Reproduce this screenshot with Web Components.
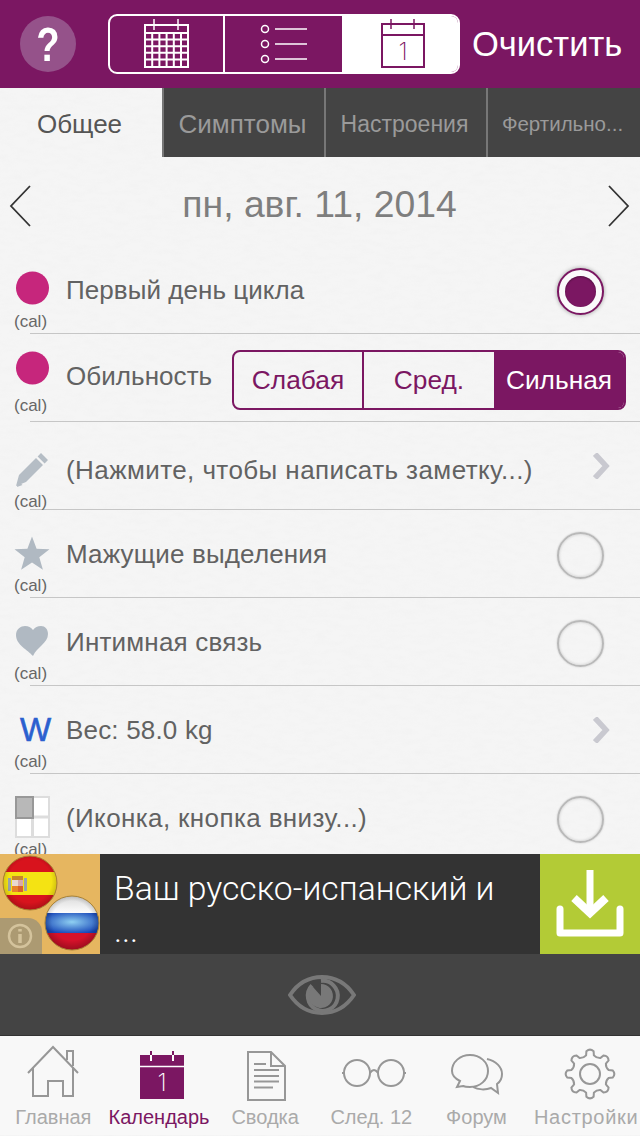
<!DOCTYPE html>
<html lang="ru">
<head>
<meta charset="utf-8">
<title>Календарь</title>
<style>
  html, body { margin: 0; padding: 0; }
  body { font-family: "Liberation Sans", Arial, sans-serif; overflow: hidden; }
</style>
</head>
<body>
<app-shell>
  <top-bar></top-bar>
  <tab-strip></tab-strip>
  <day-view>
    <date-nav>пн, авг. 11, 2014</date-nav>

    <cal-row label="Первый день цикла" style="--icon-y:42px;--cal-gap:6px;--label-y:44px">
      <svg slot="icon" width="36" height="36" viewBox="0 0 36 36"><circle cx="18.500" cy="18" r="16.500" fill="#c6267c"/></svg>
      <radio-mark slot="end" checked></radio-mark>
    </cal-row>

    <cal-row label="Обильность" style="--icon-y:34px;--cal-gap:10px;--label-y:42px">
      <svg slot="icon" width="36" height="36" viewBox="0 0 36 36"><circle cx="18.500" cy="18" r="16.500" fill="#c6267c"/></svg>
      <level-picker slot="end"></level-picker>
    </cal-row>

    <cal-row label="(Нажмите, чтобы написать заметку...)" style="--icon-y:48px;--cal-gap:4px;--label-y:48px;--label-ls:.42px">
      <svg slot="icon" width="36" height="36" viewBox="0 0 36 36"><path fill="#b5bdc5" d="M27 1l7 7-3.400 3.500-7-7zM22 6l7 7-17 17-10 4 3-11zM3 35l1-6 4.500 4z"/></svg>
      <row-chevron slot="end"></row-chevron>
    </cal-row>

    <cal-row label="Мажущие выделения" style="--icon-y:43px;--cal-gap:5px;--label-y:44px;--label-ls:.16px">
      <svg slot="icon" width="36" height="36" viewBox="0 0 36 36"><path fill="#b0b9c2" d="M18 1.500l4.600 12.300 12.900.4-10.200 8 3.600 12.600L18 27.500 7.100 34.800l3.600-12.600-10.200-8 12.900-.4z"/></svg>
      <radio-mark slot="end"></radio-mark>
    </cal-row>

    <cal-row label="Интимная связь" style="--icon-y:43px;--cal-gap:5px;--label-y:44px;--label-ls:.2px">
      <svg slot="icon" width="36" height="36" viewBox="0 0 36 36"><path fill="#b0b9c2" d="M19 33C14 27 2 22 2 12 2 6 7 3 11 3c3.500 0 6 1.500 8 4 2-2.500 4.500-4 8-4 4 0 7 3 7 8 0 9-11 13-15 22z"/></svg>
      <radio-mark slot="end"></radio-mark>
    </cal-row>

    <cal-row label="Вес: 58.0 kg" style="--icon-y:44px;--cal-gap:4px;--label-y:44px;--label-ls:.18px">
      <span slot="icon" style="font:33px/36px 'Liberation Sans',sans-serif;color:#2b60cf;-webkit-text-stroke:.6px #2b60cf;margin-left:6px">W</span>
      <row-chevron slot="end"></row-chevron>
    </cal-row>

    <cal-row label="(Иконка, кнопка внизу...)" style="--icon-y:44px;--cal-gap:4px;--label-y:44px;--label-ls:.38px">
      <svg slot="icon" width="36" height="42" viewBox="0 0 36 42" style="margin-top:-3px">
        <rect x="2" y="1" width="33" height="40" fill="#fff" stroke="#ddd" stroke-width="2"/>
        <path d="M18.500 1v40M2 21h33" stroke="#ddd" stroke-width="3"/>
        <rect x="2" y="1" width="17" height="21" fill="#b8b8b8" stroke="#989898" stroke-width="2"/>
      </svg>
      <radio-mark slot="end"></radio-mark>
    </cal-row>
  </day-view>
  <promo-banner>Ваш русско-испанский и ...</promo-banner>
  <eye-bar></eye-bar>
  <bottom-nav></bottom-nav>
</app-shell>

<script>
const PURPLE = '#7b1762';

class AppShell extends HTMLElement {
  constructor() {
    super();
    this.attachShadow({ mode: 'open' });
    this.shadowRoot.innerHTML = `
      <style>
        :host {
          display: flex;
          flex-direction: column;
          position: relative;
          width: 640px;
          height: 1136px;
          overflow: hidden;
          background: #f5f5f5;
        }
        svg { position: absolute; left: 0; top: 0; }
        .content { position: relative; display: flex; flex-direction: column; height: 100%; }
      </style>
      <svg width="640" height="1136">
        <filter id="paper" x="0" y="0" width="100%" height="100%">
          <feTurbulence type="fractalNoise" baseFrequency="0.07 0.2" numOctaves="3" seed="7"/>
          <feColorMatrix values="0 0 0 0 .55  0 0 0 0 .55  0 0 0 0 .55  .55 0 0 0 -.2"/>
        </filter>
        <rect width="640" height="1136" filter="url(#paper)" opacity=".15"/>
      </svg>
      <div class="content"><slot></slot></div>
    `;
  }
}

class TopBar extends HTMLElement {
  constructor() {
    super();
    this.attachShadow({ mode: 'open' });
    let grid = '';
    for (let i = 1; i < 6; i++) grid += `M${1 + i * 7.2} 14V47`;
    for (let i = 1; i < 5; i++) grid += `M1 ${14 + i * 6.6}H44`;
    this.shadowRoot.innerHTML = `
      <style>
        :host {
          display: flex;
          align-items: center;
          flex: none;
          height: 88px;
          background: ${PURPLE};
          color: #fff;
          box-sizing: border-box;
          padding: 0 16px 0 20px;
        }
        .help {
          flex: none;
          width: 56px;
          height: 56px;
          border-radius: 50%;
          background: #95528a;
          display: flex;
          align-items: center;
          justify-content: center;
          font: bold 49px/56px "Liberation Sans", sans-serif;
        }
        .help span { display: block; transform: scaleX(.78); }
        .switch {
          flex: none;
          display: flex;
          width: 352px;
          height: 60px;
          margin: 0 12px 0 32px;
          box-sizing: border-box;
          border: 2px solid #fff;
          border-radius: 9px;
          overflow: hidden;
        }
        .switch div { display: flex; align-items: center; justify-content: center; box-sizing: border-box; }
        .a { width: 115px; border-right: 2px solid #fff; }
        .b { width: 117px; }
        .c { flex: 1; background: #fff; padding-left: 8px; }
        .clear { font-size: 34.500px; white-space: nowrap; }
        svg { display: block; }
      </style>
      <div class="help"><span>?</span></div>
      <div class="switch">
        <div class="a">
          <svg width="46" height="50" viewBox="0 0 46 50" fill="none" stroke="#fff">
            <rect x="1" y="6" width="43" height="42" stroke-width="2"/>
            <path d="M1 14H44" stroke-width="2"/>
            <path d="${grid}" stroke-width="2"/>
            <path d="M10 0v11M34 0v11" stroke-width="1.500"/>
          </svg>
        </div>
        <div class="b">
          <svg width="48" height="40" viewBox="0 0 48 40" fill="none" stroke="#fff" stroke-width="1.500">
            <circle cx="5" cy="5" r="3.500"/><circle cx="5" cy="20" r="3.500"/><circle cx="5" cy="35" r="3.500"/>
            <path d="M15 5H47M15 20H47M15 35H47"/>
          </svg>
        </div>
        <div class="c">
          <svg width="46" height="50" viewBox="0 0 46 50" fill="none" stroke="${PURPLE}">
            <rect x="1" y="5" width="42" height="43" stroke-width="2"/>
            <path d="M1 16H43" stroke-width="2"/>
            <path d="M10 0v10M33 0v10" stroke-width="1.500"/>
            <text x="22" y="41" text-anchor="middle" font-family="Inter" font-weight="200" font-size="24" fill="${PURPLE}" stroke="none">1</text>
          </svg>
        </div>
      </div>
      <div class="clear">Очистить</div>
    `;
  }
}

class TabStrip extends HTMLElement {
  constructor() {
    super();
    this.attachShadow({ mode: 'open' });
    const tabs = [['Общее', 26], ['Симптомы', 26], ['Настроения', 23], ['Фертильно...', 20.5]];
    this.shadowRoot.innerHTML = `
      <style>
        :host {
          display: grid;
          grid-template-columns: 162px 162px 162px 154px;
          flex: none;
          height: 69px;
        }
        .tab {
          display: flex;
          align-items: center;
          justify-content: center;
          background: #444;
          color: #9a9a9a;
          border-left: 2px solid #777;
          white-space: nowrap;
          box-sizing: border-box;
          padding: 3px 3px 0 0;
        }
        .tab.first { background: none; color: #555; border: 0; }
      </style>
      ${tabs.map((t, i) => `<div class="tab${i ? '' : ' first'}" style="font-size:${t[1]}px">${t[0]}</div>`).join('')}
    `;
  }
}

class DayView extends HTMLElement {
  constructor() {
    super();
    this.attachShadow({ mode: 'open' });
    this.shadowRoot.innerHTML = `
      <style>
        :host { display: block; flex: none; height: 697px; overflow: hidden; }
      </style>
      <slot></slot>
    `;
  }
}

class DateNav extends HTMLElement {
  constructor() {
    super();
    this.attachShadow({ mode: 'open' });
    this.shadowRoot.innerHTML = `
      <style>
        :host {
          display: flex;
          align-items: center;
          justify-content: space-between;
          height: 89px;
          box-sizing: border-box;
          padding: 6px 10px 0 9px;
          color: #7e7e7e;
          font-size: 37.300px;
        }
        svg { display: block; margin-top: 3px; }
      </style>
      <svg width="22" height="42" viewBox="0 0 22 42" fill="none" stroke="#333" stroke-width="1.800"><path d="M21 1L2 21l19 20"/></svg>
      <span><slot></slot></span>
      <svg width="22" height="42" viewBox="0 0 22 42" fill="none" stroke="#333" stroke-width="1.800"><path d="M1 1l19 20L1 41"/></svg>
    `;
  }
}

class CalRow extends HTMLElement {
  constructor() {
    super();
    this.attachShadow({ mode: 'open' });
    this.shadowRoot.innerHTML = `
      <style>
        :host {
          display: flex;
          align-items: flex-start;
          height: 88px;
          padding-right: 36px;
          box-sizing: border-box;
          background: linear-gradient(#c6c6c6, #c6c6c6) no-repeat 30px 100% / 610px 1px;
        }
        .lead {
          flex: none;
          width: 52px;
          margin-left: 14px;
          padding-top: calc(var(--icon-y) - 18px);
        }
        .icon { display: flex; height: 36px; align-items: center; }
        .cal {
          margin-top: var(--cal-gap);
          font-size: 17px;
          line-height: 20px;
          color: #666;
        }
        .label {
          flex: 1;
          margin-top: calc(var(--label-y) - 15px);
          font-size: 26px;
          line-height: 30px;
          letter-spacing: var(--label-ls, .06px);
          color: #626262;
          white-space: nowrap;
        }
        .end { flex: none; display: flex; align-items: center; height: 90px; }
      </style>
      <div class="lead">
        <div class="icon"><slot name="icon"></slot></div>
        <div class="cal">(cal)</div>
      </div>
      <div class="label">${this.getAttribute('label')}</div>
      <div class="end"><slot name="end"></slot></div>
    `;
  }
}

class RadioMark extends HTMLElement {
  constructor() {
    super();
    this.attachShadow({ mode: 'open' });
    const on = this.hasAttribute('checked');
    this.shadowRoot.innerHTML = `
      <style>
        :host {
          display: block;
          width: 47px;
          height: 47px;
          box-sizing: border-box;
          border-radius: 50%;
          border: 2px solid ${on ? PURPLE : '#b9b9b9'};
          box-shadow: ${on ? '0 0 4px rgba(0,0,0,.35)' : 'inset 0 0 3px rgba(0,0,0,.18), 0 0 2px rgba(0,0,0,.2)'};
          background: ${on ? '#fafafa' : 'none'};
          padding: 6px;
        }
        .dot {
          width: 31px;
          height: 31px;
          border-radius: 50%;
          background: ${on ? PURPLE : 'none'};
          box-shadow: ${on ? 'inset 0 1px 2px rgba(0,0,0,.35)' : 'none'};
        }
      </style>
      <div class="dot"></div>
    `;
  }
}

class RowChevron extends HTMLElement {
  constructor() {
    super();
    this.attachShadow({ mode: 'open' });
    this.shadowRoot.innerHTML = `
      <style>
        :host { display: block; margin: -2px -6px 0 0; width: 17px; }
        svg { display: block; }
      </style>
      <svg width="17" height="26" viewBox="0 0 17 26" fill="none" stroke="#c9c9d0" stroke-width="5.500"><path d="M2 1l11 12L2 25"/></svg>
    `;
  }
}

class LevelPicker extends HTMLElement {
  constructor() {
    super();
    this.attachShadow({ mode: 'open' });
    this.shadowRoot.innerHTML = `
      <style>
        :host {
          display: grid;
          grid-template-columns: 128px 132px 1fr;
          width: 394px;
          height: 60px;
          margin: 2px -22px 0 0;
          box-sizing: border-box;
          border: 2px solid ${PURPLE};
          border-radius: 8px;
          overflow: hidden;
          color: ${PURPLE};
          font-size: 26.300px;
        }
        div { display: flex; align-items: center; justify-content: center; }
        .mid { border-left: 2px solid ${PURPLE}; }
        .on { background: ${PURPLE}; color: #fff; }
      </style>
      <div>Слабая</div>
      <div class="mid">Сред.</div>
      <div class="on">Сильная</div>
    `;
  }
}

class PromoBanner extends HTMLElement {
  constructor() {
    super();
    this.attachShadow({ mode: 'open' });
    this.shadowRoot.innerHTML = `
      <style>
        :host {
          display: flex;
          flex: none;
          height: 100px;
          background: #333;
          color: #fff;
        }
        svg { display: block; flex: none; }
        .text {
          flex: 1;
          padding: 14px 30px 0 14px;
          font-family: Roboto, "Liberation Sans", sans-serif;
          font-weight: 300;
          font-size: 33.700px;
          line-height: 42px;
          overflow: hidden;
        }
      </style>
      <svg width="100" height="100" viewBox="0 0 100 100">
        <defs>
          <clipPath id="es"><circle cx="30" cy="29" r="27"/></clipPath>
          <clipPath id="ru"><circle cx="72" cy="69" r="27"/></clipPath>
          <radialGradient id="shade" cx=".5" cy=".45" r=".55">
            <stop offset=".65" stop-color="#000" stop-opacity="0"/>
            <stop offset="1" stop-color="#000" stop-opacity=".3"/>
          </radialGradient>
          <radialGradient id="blue" cx=".5" cy=".45" r=".6">
            <stop offset="0" stop-color="#8fd0f2"/>
            <stop offset="1" stop-color="#1746b8"/>
          </radialGradient>
          <linearGradient id="white" x1="0" y1="0" x2="0" y2="1">
            <stop offset="0" stop-color="#d9d9d9"/><stop offset="1" stop-color="#fff"/>
          </linearGradient>
        </defs>
        <rect width="100" height="100" fill="#e6b660"/>
        <path d="M0 64H28a14 14 0 0 1 14 14V100H0z" fill="#ac9a72"/>
        <circle cx="20" cy="82" r="11" fill="none" stroke="#d4c39c" stroke-width="2.500"/>
        <path d="M20 80v9M20 75v2.500" stroke="#d4c39c" stroke-width="3.500"/>
        <g clip-path="url(#es)">
          <rect x="0" y="0" width="60" height="60" fill="#d8131d"/>
          <rect x="0" y="18" width="60" height="23" fill="#f4e313"/>
          <rect x="8" y="24" width="3" height="13" fill="#9aa3a8"/>
          <rect x="24" y="24" width="3" height="13" fill="#9aa3a8"/>
          <rect x="12" y="22" width="11" height="4" fill="#c8862a"/>
          <rect x="12" y="26" width="6" height="6" fill="#e9d8d0"/>
          <rect x="18" y="26" width="5" height="6" fill="#d9a8a8"/>
          <rect x="12" y="32" width="6" height="6" fill="#e8832a"/>
          <rect x="18" y="32" width="5" height="6" fill="#d8622a"/>
          <rect x="0" y="0" width="60" height="60" fill="url(#shade)"/>
        </g>
        <circle cx="30" cy="29" r="27" fill="none" stroke="#a88236" stroke-width="1"/>
        <g clip-path="url(#ru)">
          <rect x="44" y="42" width="56" height="18" fill="url(#white)"/>
          <rect x="44" y="59" width="56" height="20" fill="url(#blue)"/>
          <rect x="44" y="79" width="56" height="18" fill="#d6112a"/>
          <rect x="44" y="42" width="56" height="55" fill="url(#shade)"/>
        </g>
        <circle cx="72" cy="69" r="27" fill="none" stroke="#a88236" stroke-width="1"/>
      </svg>
      <div class="text"><slot></slot></div>
      <svg width="100" height="100" viewBox="0 0 100 100">
        <rect width="100" height="100" fill="#b3cb36"/>
        <path d="M50 16V56" stroke="#fff" stroke-width="7" fill="none"/>
        <path d="M34 44l16 15 16-15" stroke="#fff" stroke-width="8" fill="none"/>
        <path d="M20 55V79H80V55" stroke="#fff" stroke-width="7" fill="none" stroke-linejoin="round" stroke-linecap="round"/>
      </svg>
    `;
  }
}

class EyeBar extends HTMLElement {
  constructor() {
    super();
    this.attachShadow({ mode: 'open' });
    this.shadowRoot.innerHTML = `
      <style>
        :host {
          display: flex;
          align-items: center;
          justify-content: center;
          flex: none;
          height: 82px;
          box-sizing: border-box;
          background: #444;
          border-bottom: 1px solid #333;
        }
        svg { display: block; margin-left: 3px; }
      </style>
      <svg width="68" height="42" viewBox="0 0 68 42" fill="none" stroke="#787878">
        <path d="M2 21C10 9 21 3 34 3s24 6 32 18C58 33 47 39 34 39S10 33 2 21z" stroke-width="4"/>
        <path d="M24 11.500A15 15 0 1 0 33 7" stroke-width="4"/>
        <path d="M33 10a12 12 0 1 1-8 3l8 9z" fill="#787878" stroke="none"/>
      </svg>
    `;
  }
}

class BottomNav extends HTMLElement {
  constructor() {
    super();
    this.attachShadow({ mode: 'open' });
    const items = [
      ['Главная', 0, `<path d="M28 37L53 11l25 26M33 31V60H48V45H63V60H73V31M67 24V15h6v15"/>`],
      ['Календарь', -2, `<rect x="33" y="19" width="44" height="44" fill="${PURPLE}" stroke="none"/>
        <path d="M44 15v4M66 15v4" stroke="${PURPLE}" stroke-width="2"/>
        <path d="M44 19v6M66 19v6" stroke="#fff" stroke-width="2"/>
        <path d="M33 30.500H77" stroke="#fff" stroke-width="1.500"/>
        <text x="55" y="55" text-anchor="middle" font-family="Inter" font-weight="200" font-size="24" fill="#fff" stroke="none">1</text>`],
      ['Сводка', -3, `<path d="M34 16H57L71 30V64H34zM57 16V30H71"/><path d="M40 28H52M40 34H65M40 40H65M40 45.500H65M40 51.500H59"/>`],
      ['След. 12', -4, `<circle cx="37" cy="37" r="13"/><circle cx="71" cy="37" r="13"/><path d="M50 37q4-6 8 0M22 37h2M84 37h2"/>`],
      ['Форум', -7, `<path d="M30 51l3-6C27 42 25 38 25 35c0-9 8-16 18-16s18 7 18 16-8 16-18 16c-3 0-5 0-7-1z"/><path d="M60 23c9 2 15 8 15 15 0 4-2 8-5 10l1 9-7-5c-5 2-13 2-18-1"/>`],
      ['Настройки', -1, `<path d="${gearPath(56, 38, 25, 19, 8)}"/><circle cx="56" cy="38" r="10"/>`]
    ];
    this.shadowRoot.innerHTML = `
      <style>
        :host {
          display: grid;
          grid-template-columns: repeat(6, 1fr);
          flex: none;
          height: 99px;
          background: #f8f8f8;
        }
        .item { display: flex; flex-direction: column; align-items: center; color: #aaa; font-size: 20px; white-space: nowrap; }
        .item.on { color: ${PURPLE}; }
        svg { display: block; flex: none; }
        .name { line-height: 26px; }
        .item:last-child .name { letter-spacing: .7px; }
      </style>
      ${items.map((it, i) => `
        <div class="item${i === 1 ? ' on' : ''}">
          <svg width="106" height="68" viewBox="0 0 106 68" fill="none" stroke="#979797" stroke-width="2">${it[2]}</svg>
          <div class="name" style="margin-left:${it[1]}px">${it[0]}</div>
        </div>`).join('')}
    `;
  }
}

// контур шестерёнки, считается один раз при рендере
function gearPath(cx, cy, rOut, rIn, teeth) {
  const step = Math.PI * 2 / teeth;
  const pt = (r, a) => `${(cx + r * Math.cos(a)).toFixed(1)} ${(cy + r * Math.sin(a)).toFixed(1)}`;
  let d = '';
  for (let i = 0; i < teeth; i++) {
    const a = i * step - Math.PI / 2;
    const w = step * 0.2;
    d += `${i ? 'L' : 'M'}${pt(rIn, a - w * 1.3)}`;
    d += `L${pt(rOut - 2, a - w)}Q${pt(rOut + 1, a)} ${pt(rOut - 2, a + w)}`;
    d += `L${pt(rIn, a + w * 1.3)}Q${pt(rIn - 2, a + step / 2)} ${pt(rIn, a + step - w * 1.3)}`;
  }
  return d + 'Z';
}

customElements.define('app-shell', AppShell);
customElements.define('top-bar', TopBar);
customElements.define('tab-strip', TabStrip);
customElements.define('day-view', DayView);
customElements.define('date-nav', DateNav);
customElements.define('cal-row', CalRow);
customElements.define('radio-mark', RadioMark);
customElements.define('row-chevron', RowChevron);
customElements.define('level-picker', LevelPicker);
customElements.define('promo-banner', PromoBanner);
customElements.define('eye-bar', EyeBar);
customElements.define('bottom-nav', BottomNav);
</script>
</body>
</html>
